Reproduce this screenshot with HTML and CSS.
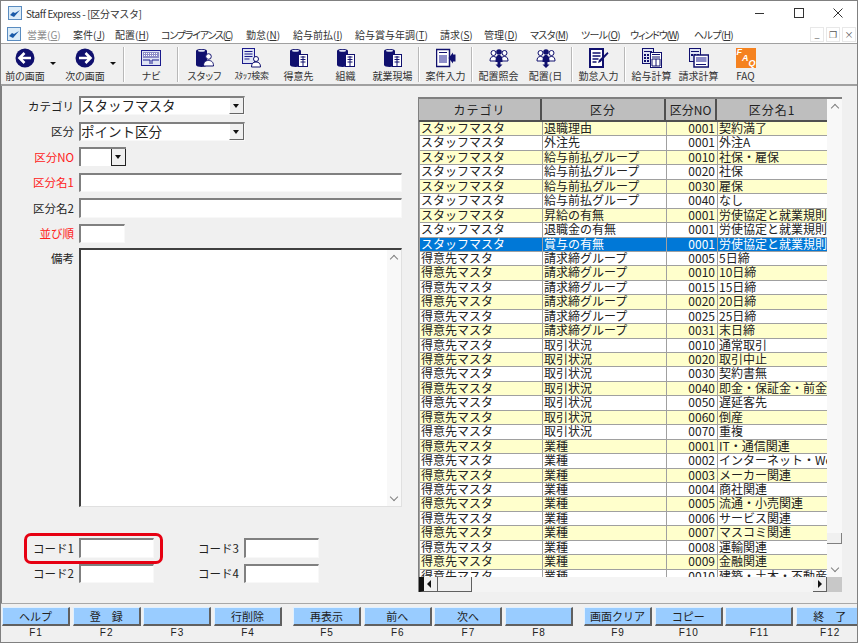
FILE: index.html
```html
<!DOCTYPE html>
<html lang="ja">
<head>
    <meta charset="UTF-8">
    <title>Staff Express - [区分マスタ]</title>
    <link rel="stylesheet" href="styles.css">
</head>
<body>
    <svg class="defs" width="0" height="0">
        <symbol id="i-back" viewBox="0 0 20 20">
            <circle cx="10" cy="10" r="9.5" fill="#10106e"/>
            <path d="M16 10H5M9.5 5L4.5 10l5 5" fill="none" stroke="#fff" stroke-width="2.6"/>
        </symbol>
        <symbol id="i-next" viewBox="0 0 20 20">
            <circle cx="10" cy="10" r="9.5" fill="#10106e"/>
            <path d="M4 10h11M10.5 5l5 5-5 5" fill="none" stroke="#fff" stroke-width="2.6"/>
        </symbol>
        <symbol id="i-navi" viewBox="0 0 20 20">
            <rect x="0.5" y="2.5" width="19" height="15" fill="#dfe4f4" stroke="#1a1a8c"/>
            <rect x="2" y="4" width="16" height="6" fill="#8c8cc8"/>
            <path d="M3 5.5h14M3 7.5h14" stroke="#fff" stroke-dasharray="1 1"/>
            <path d="M2 12h7v4M18 12h-7v4" fill="none" stroke="#1a1a8c"/>
        </symbol>
        <symbol id="i-staffman" viewBox="0 0 20 20">
            <path d="M1 3c0-2.600 11-2.600 11 0v14c0 2.600-11 2.600-11 0z" fill="#10106e"/>
            <ellipse cx="6.500" cy="2.800" rx="3.500" ry="1" fill="#dfe4f4"/>
            <circle cx="13.500" cy="8.500" r="2.800" fill="#fff" stroke="#10106e"/>
            <path d="M8.500 18c0-4 2-5.500 5-5.500s5 1.500 5 5.500z" fill="#fff" stroke="#10106e"/>
        </symbol>
        <symbol id="i-search" viewBox="0 0 20 20">
            <rect x="0.500" y="0.500" width="12" height="15" fill="#dfe4f4" stroke="#1a1a8c"/>
            <path d="M2.500 3.500h8M2.500 6h8M2.500 8.500h8M2.500 11h5" stroke="#1a1a8c"/>
            <circle cx="14" cy="11" r="2.500" fill="#fff" stroke="#10106e"/>
            <path d="M9.500 19c0-3.500 1.500-5 4.500-5s4.500 1.500 4.500 5z" fill="#fff" stroke="#10106e"/>
        </symbol>
        <symbol id="i-office" viewBox="0 0 20 20">
            <path d="M1 3c0-2.600 11-2.600 11 0v14c0 2.600-11 2.600-11 0z" fill="#10106e"/>
            <ellipse cx="6.500" cy="2.800" rx="3.500" ry="1" fill="#dfe4f4"/>
            <rect x="9.500" y="6.500" width="9" height="12" fill="#fff" stroke="#10106e"/>
            <path d="M11.500 9h5M11.500 11.500h5M11.500 14h5M14 8v10" stroke="#10106e"/>
        </symbol>
        <symbol id="i-case" viewBox="0 0 20 20">
            <rect x="0.500" y="1.500" width="13" height="17" fill="#fff" stroke="#10106e" stroke-width="1.500"/>
            <path d="M3 4.500h8" stroke="#10106e"/>
            <rect x="3" y="7" width="8" height="8" fill="#8c8cc8"/>
            <path d="M19.500 6.500v7h-2.500v2L12.500 10l4.500-5.500v2z" fill="#10106e"/>
        </symbol>
        <symbol id="i-assign" viewBox="0 0 20 20">
            <circle cx="4.500" cy="5" r="2.500" fill="#fff" stroke="#10106e"/>
            <circle cx="15.500" cy="5" r="2.500" fill="#fff" stroke="#10106e"/>
            <path d="M1 13c0-3 1-4.500 3.500-4.500S8 10 8 13zM12 13c0-3 1-4.500 3.500-4.500S19 10 19 13z" fill="#fff" stroke="#10106e"/>
            <circle cx="10" cy="4" r="2.800" fill="#10106e"/>
            <path d="M6.500 14c0-5 1-7 3.500-7s3.500 2 3.500 7z" fill="#10106e"/>
            <path d="M8.500 14h3v2.500h2L10 20l-3.500-3.500h2z" fill="#10106e"/>
        </symbol>
        <symbol id="i-time" viewBox="0 0 20 20">
            <rect x="1" y="1" width="13" height="18" fill="#fff" stroke="#10106e" stroke-width="2"/>
            <path d="M3.500 5h8M3.500 8h8M3.500 11h6M3.500 14h4" stroke="#10106e" stroke-width="1.500"/>
            <path d="M18.500 4l1 1.500-8 8.500-2.500 1 1-3z" fill="#10106e"/>
        </symbol>
        <symbol id="i-pay" viewBox="0 0 20 20">
            <rect x="0.500" y="0.500" width="11" height="15" fill="#dfe4f4" stroke="#10106e"/>
            <path d="M2 3h8v1H2zM2 6h2v2H2zM5 6h2v2H5zM8 6h2v2H8zM2 9h2v2H2zM5 9h2v2H5zM8 9h2v2H8zM2 12h2v2H2zM5 12h2v2H5z" fill="#10106e"/>
            <rect x="8.500" y="4.500" width="11" height="15" fill="#fff" stroke="#10106e"/>
            <path d="M10 6.500h8M10 9h8M14 11v7M10 11h8v7h-8z" fill="none" stroke="#10106e"/>
        </symbol>
        <symbol id="i-bill" viewBox="0 0 20 20">
            <rect x="0.500" y="0.500" width="11" height="13" fill="#dfe4f4" stroke="#10106e"/>
            <path d="M2 3h8v1H2zM2 6h2v2H2zM5 6h2v2H5zM8 6h2v2H8z" fill="#10106e"/>
            <rect x="5" y="7" width="14.500" height="12" fill="#fff" stroke="#10106e" stroke-width="1.500"/>
            <rect x="7" y="9" width="10.500" height="5" fill="#8c8cc8"/>
            <path d="M7 16.500h10" stroke="#10106e"/>
        </symbol>
    </svg>

    <div class="title-bar">
        <svg class="app-icon" viewBox="0 0 14 14"><rect x="0.500" y="0.500" width="13" height="13" fill="#dcecf8" stroke="#5a8cc0"/><path d="M2 9l4 2 6-7-5 3-2-1z" fill="#1a5aa8"/></svg>
        <span class="title-text">Staff Express - [区分マスタ]</span>
        <div class="win-controls">
            <svg viewBox="0 0 10 10"><path d="M0 5.500h9" stroke="#333"/></svg>
            <svg viewBox="0 0 10 10"><rect x="0.500" y="0.500" width="9" height="9" fill="none" stroke="#333"/></svg>
            <svg viewBox="0 0 10 10"><path d="M0.500 0.500l9 9M9.500 0.500l-9 9" stroke="#333"/></svg>
        </div>
    </div>

    <div class="menu-bar">
        <svg class="app-icon" viewBox="0 0 14 14"><rect x="0.500" y="0.500" width="13" height="13" fill="#dcecf8" stroke="#5a8cc0"/><path d="M2 9l4 2 6-7-5 3-2-1z" fill="#1a5aa8"/></svg>
        <div class="menu-items">
            <span class="disabled">営業(<u>G</u>)</span>
            <span>案件(<u>J</u>)</span>
            <span>配置(<u>H</u>)</span>
            <span class="kana tight">コンプライアンス(<u>C</u>)</span>
            <span>勤怠(<u>N</u>)</span>
            <span>給与前払(<u>I</u>)</span>
            <span>給与賞与年調(<u>T</u>)</span>
            <span>請求(<u>S</u>)</span>
            <span>管理(<u>D</u>)</span>
            <span class="kana">マスタ(<u>M</u>)</span>
            <span class="kana">ツール(<u>O</u>)</span>
            <span class="kana tight">ウィンドウ(<u>W</u>)</span>
            <span class="kana">ヘルプ(<u>H</u>)</span>
        </div>
        <div class="mdi-buttons">
            <span class="mdi-btn">_</span>
            <span class="mdi-btn">❐</span>
            <span class="mdi-btn">×</span>
        </div>
    </div>

    <div class="toolbar">
        <div class="tool wide"><svg class="tool-icon"><use href="#i-back"/></svg><span>前の画面</span></div>
        <div class="drop"></div>
        <div class="tool wide"><svg class="tool-icon"><use href="#i-next"/></svg><span>次の画面</span></div>
        <div class="drop"></div>
        <div class="sep"></div>
        <div class="tool wide"><svg class="tool-icon"><use href="#i-navi"/></svg><span>ナビ</span></div>
        <div class="sep"></div>
        <div class="tool"><svg class="tool-icon"><use href="#i-staffman"/></svg><span>スタッフ</span></div>
        <div class="tool"><svg class="tool-icon"><use href="#i-search"/></svg><span class="tiny">ｽﾀｯﾌ検索</span></div>
        <div class="tool"><svg class="tool-icon"><use href="#i-office"/></svg><span>得意先</span></div>
        <div class="tool"><svg class="tool-icon"><use href="#i-office"/></svg><span>組織</span></div>
        <div class="tool"><svg class="tool-icon"><use href="#i-office"/></svg><span>就業現場</span></div>
        <div class="sep"></div>
        <div class="tool"><svg class="tool-icon"><use href="#i-case"/></svg><span>案件入力</span></div>
        <div class="sep"></div>
        <div class="tool"><svg class="tool-icon"><use href="#i-assign"/></svg><span>配置照会</span></div>
        <div class="tool"><svg class="tool-icon"><use href="#i-assign"/></svg><span>配置(日</span></div>
        <div class="sep"></div>
        <div class="tool"><svg class="tool-icon"><use href="#i-time"/></svg><span>勤怠入力</span></div>
        <div class="sep"></div>
        <div class="tool"><svg class="tool-icon"><use href="#i-pay"/></svg><span>給与計算</span></div>
        <div class="tool"><svg class="tool-icon"><use href="#i-bill"/></svg><span>請求計算</span></div>
        <div class="tool"><div class="faq-icon"><b>F</b><b>A</b><b>Q</b></div><span>FAQ</span></div>
    </div>

    <div class="content">
        <div class="form">
            <div class="field-row">
                <label>カテゴリ</label>
                <div class="combo"><span class="combo-text">スタッフマスタ</span><span class="combo-btn"></span></div>
            </div>
            <div class="field-row">
                <label>区分</label>
                <div class="combo"><span class="combo-text">ポイント区分</span><span class="combo-btn"></span></div>
            </div>
            <div class="field-row">
                <label class="required">区分NO</label>
                <div class="combo small"><span class="combo-text"></span><span class="combo-btn"></span></div>
            </div>
            <div class="field-row">
                <label class="required">区分名1</label>
                <div class="input long"></div>
            </div>
            <div class="field-row">
                <label>区分名2</label>
                <div class="input long"></div>
            </div>
            <div class="field-row">
                <label class="required">並び順</label>
                <div class="input order"></div>
            </div>
            <div class="field-row memo-row">
                <label>備考</label>
                <div class="memo">
                    <div class="memo-scroll"><i class="chev up"></i><i class="chev down"></i></div>
                </div>
            </div>
            <div class="codes">
                <div class="highlight"></div>
                <div class="field-row">
                    <label>コード1</label>
                    <div class="input code"></div>
                </div>
                <div class="field-row">
                    <label class="code-label">コード3</label>
                    <div class="input code"></div>
                </div>
                <div class="field-row">
                    <label>コード2</label>
                    <div class="input code"></div>
                </div>
                <div class="field-row">
                    <label class="code-label">コード4</label>
                    <div class="input code"></div>
                </div>
            </div>
        </div>

        <div class="grid-box">
            <div class="grid-main">
                <div class="list">
                    <div class="row head"><span>カテゴリ</span><span>区分</span><span>区分NO</span><span>区分名1</span></div>
                    <div class="row odd"><span>スタッフマスタ</span><span>退職理由</span><span>0001</span><span>契約満了</span></div>
                    <div class="row"><span>スタッフマスタ</span><span>外注先</span><span>0001</span><span>外注A</span></div>
                    <div class="row odd"><span>スタッフマスタ</span><span>給与前払グループ</span><span>0010</span><span>社保・雇保</span></div>
                    <div class="row"><span>スタッフマスタ</span><span>給与前払グループ</span><span>0020</span><span>社保</span></div>
                    <div class="row odd"><span>スタッフマスタ</span><span>給与前払グループ</span><span>0030</span><span>雇保</span></div>
                    <div class="row"><span>スタッフマスタ</span><span>給与前払グループ</span><span>0040</span><span>なし</span></div>
                    <div class="row odd"><span>スタッフマスタ</span><span>昇給の有無</span><span>0001</span><span>労使協定と就業規則による</span></div>
                    <div class="row"><span>スタッフマスタ</span><span>退職金の有無</span><span>0001</span><span>労使協定と就業規則による</span></div>
                    <div class="row sel"><span>スタッフマスタ</span><span>賞与の有無</span><span>0001</span><span>労使協定と就業規則による</span></div>
                    <div class="row"><span>得意先マスタ</span><span>請求締グループ</span><span>0005</span><span>5日締</span></div>
                    <div class="row odd"><span>得意先マスタ</span><span>請求締グループ</span><span>0010</span><span>10日締</span></div>
                    <div class="row"><span>得意先マスタ</span><span>請求締グループ</span><span>0015</span><span>15日締</span></div>
                    <div class="row odd"><span>得意先マスタ</span><span>請求締グループ</span><span>0020</span><span>20日締</span></div>
                    <div class="row"><span>得意先マスタ</span><span>請求締グループ</span><span>0025</span><span>25日締</span></div>
                    <div class="row odd"><span>得意先マスタ</span><span>請求締グループ</span><span>0031</span><span>末日締</span></div>
                    <div class="row"><span>得意先マスタ</span><span>取引状況</span><span>0010</span><span>通常取引</span></div>
                    <div class="row odd"><span>得意先マスタ</span><span>取引状況</span><span>0020</span><span>取引中止</span></div>
                    <div class="row"><span>得意先マスタ</span><span>取引状況</span><span>0030</span><span>契約書無</span></div>
                    <div class="row odd"><span>得意先マスタ</span><span>取引状況</span><span>0040</span><span>即金・保証金・前金</span></div>
                    <div class="row"><span>得意先マスタ</span><span>取引状況</span><span>0050</span><span>遅延客先</span></div>
                    <div class="row odd"><span>得意先マスタ</span><span>取引状況</span><span>0060</span><span>倒産</span></div>
                    <div class="row"><span>得意先マスタ</span><span>取引状況</span><span>0070</span><span>重複</span></div>
                    <div class="row odd"><span>得意先マスタ</span><span>業種</span><span>0001</span><span>IT・通信関連</span></div>
                    <div class="row"><span>得意先マスタ</span><span>業種</span><span>0002</span><span>インターネット・Web</span></div>
                    <div class="row odd"><span>得意先マスタ</span><span>業種</span><span>0003</span><span>メーカー関連</span></div>
                    <div class="row"><span>得意先マスタ</span><span>業種</span><span>0004</span><span>商社関連</span></div>
                    <div class="row odd"><span>得意先マスタ</span><span>業種</span><span>0005</span><span>流通・小売関連</span></div>
                    <div class="row"><span>得意先マスタ</span><span>業種</span><span>0006</span><span>サービス関連</span></div>
                    <div class="row odd"><span>得意先マスタ</span><span>業種</span><span>0007</span><span>マスコミ関連</span></div>
                    <div class="row"><span>得意先マスタ</span><span>業種</span><span>0008</span><span>運輸関連</span></div>
                    <div class="row odd"><span>得意先マスタ</span><span>業種</span><span>0009</span><span>金融関連</span></div>
                    <div class="row"><span>得意先マスタ</span><span>業種</span><span>0010</span><span>建築・土木・不動産関連</span></div>
                </div>
                <div class="vscroll">
                    <i class="chev up"></i>
                    <div class="vthumb"></div>
                    <i class="chev down"></i>
                </div>
            </div>
            <div class="hscroll">
                <span class="h-btn left"></span>
                <div class="hthumb"></div>
                <div class="h-track"></div>
                <span class="h-btn right"></span>
                <span class="h-corner"></span>
            </div>
        </div>
    </div>

    <div class="fkeys">
        <div class="fkey"><button>ヘルプ</button><span>F1</span></div>
        <div class="fkey"><button>登　録</button><span>F2</span></div>
        <div class="fkey"><button></button><span>F3</span></div>
        <div class="fkey"><button>行削除</button><span>F4</span></div>
        <div class="fkey group"><button>再表示</button><span>F5</span></div>
        <div class="fkey"><button>前へ</button><span>F6</span></div>
        <div class="fkey"><button>次へ</button><span>F7</span></div>
        <div class="fkey"><button></button><span>F8</span></div>
        <div class="fkey group"><button>画面クリア</button><span>F9</span></div>
        <div class="fkey"><button>コピー</button><span>F10</span></div>
        <div class="fkey"><button></button><span>F11</span></div>
        <div class="fkey"><button>終　了</button><span>F12</span></div>
    </div>
</body>
</html>
```

FILE: styles.css
```css
* {
    box-sizing: border-box;
}
html, body {
    margin: 0;
    height: 100%;
}
body {
    width: 858px;
    height: 643px;
    overflow: hidden;
    display: flex;
    flex-direction: column;
    background-color: #f0f0f0;
    border: 1px solid #808080;
    font-family: "Noto Sans CJK JP", "Noto Sans", sans-serif;
    font-size: 12px;
    color: #222;
}
.defs {
    position: absolute;
}

/* title + menu */
.title-bar {
    height: 24px;
    flex: none;
    display: flex;
    align-items: center;
    padding-left: 7px;
    background-color: #fff;
}
.app-icon {
    width: 14px;
    height: 14px;
    flex: none;
}
.title-text {
    margin-left: 4px;
    font-size: 10px;
    letter-spacing: -0.35px;
    color: #333;
}
.win-controls {
    margin-left: auto;
    display: flex;
    align-items: center;
    gap: 29px;
    padding-right: 14px;
}
.win-controls svg {
    width: 10px;
    height: 10px;
}
.menu-bar {
    height: 18px;
    flex: none;
    display: flex;
    align-items: center;
    padding-left: 6px;
    background-color: #fff;
    font-size: 10px;
    white-space: nowrap;
}
.menu-items {
    margin-left: 6px;
    display: grid;
    grid-template-columns: 46px 42px 46px 85px 47px 62px 85px 44px 46px 51px 49px 64px 60px;
    font-feature-settings: "palt";
    color: #333;
}
.menu-items .disabled {
    color: #8c8c8c;
}
.menu-items .kana {
    letter-spacing: -0.6px;
}
.menu-items .kana.tight {
    letter-spacing: -1.2px;
}
.mdi-buttons {
    margin-left: auto;
    display: flex;
    gap: 2px;
    padding-right: 1px;
}
.mdi-btn {
    width: 14px;
    height: 15px;
    border: 1px solid #e8e8e8;
    font-size: 9px;
    line-height: 13px;
    text-align: center;
    color: #555;
}

/* toolbar */
.toolbar {
    height: 43px;
    flex: none;
    display: flex;
    padding-top: 4px;
    background-color: #f0f0f0;
    border-top: 1px solid #a0a0a0;
    border-bottom: 2px solid #a0a0a0;
}
.tool {
    width: 47px;
    flex: none;
    display: flex;
    flex-direction: column;
    align-items: center;
    font-size: 10px;
    font-feature-settings: "palt";
    line-height: 14px;
    white-space: nowrap;
    color: #333;
}
.tool.wide {
    width: 48px;
}
.tool .tiny {
    font-size: 9px;
    letter-spacing: -0.3px;
}
.tool-icon {
    width: 20px;
    height: 20px;
    margin-bottom: 1px;
}
.faq-icon {
    width: 20px;
    height: 20px;
    margin-bottom: 1px;
    padding: 0 1px;
    display: flex;
    justify-content: space-between;
    background-color: #f58220;
    color: #fff;
    font-family: "Liberation Sans", sans-serif;
    font-size: 9px;
    font-style: italic;
    line-height: 9px;
}
.faq-icon b:nth-child(2) {
    align-self: center;
}
.faq-icon b:nth-child(3) {
    align-self: flex-end;
}
.drop {
    width: 12px;
    flex: none;
    position: relative;
}
.drop::after {
    content: "";
    position: absolute;
    left: 1px;
    top: 14px;
    border-left: 3px solid transparent;
    border-right: 3px solid transparent;
    border-top: 3px solid #111;
}
.sep {
    width: 2px;
    height: 35px;
    flex: none;
    margin: -1px 2px 0;
    border-left: 1px solid #b8b8b8;
    border-right: 1px solid #fff;
}

/* main area */
.content {
    flex: 1;
    min-height: 0;
    display: flex;
    border-left: 1px solid #808080;
    padding-top: 7px;
}
.form {
    width: 416px;
    flex: none;
    padding-right: 15px;
}
.field-row {
    display: flex;
    align-items: center;
    height: 25.5px;
}
.field-row label {
    width: 72px;
    flex: none;
    margin-right: 5px;
    text-align: right;
    font-size: 11.5px;
    white-space: nowrap;
}
.field-row label.required {
    color: #ff2020;
}
.combo {
    width: 166px;
    height: 19px;
    display: flex;
    background-color: #fff;
    border-top: 2px solid #808080;
    border-left: 2px solid #808080;
    border-right: 1px solid #f8f8f8;
    border-bottom: 1px solid #f8f8f8;
}
.combo.small {
    width: 47px;
    border-right: 0;
    border-bottom: 0;
}
.combo-text {
    flex: 1;
    font-size: 13.500px;
    line-height: 15px;
    white-space: nowrap;
}
.combo-btn {
    width: 15px;
    flex: none;
    position: relative;
    background-color: #f0f0f0;
    border-left: 1px solid #fff;
    border-right: 1px solid #666;
    border-bottom: 1px solid #666;
}
.combo.small .combo-btn {
    border-left: 1px solid #222;
    border-right: 1px solid #222;
    border-bottom: 1px solid #222;
}
.combo-btn::after {
    content: "";
    position: absolute;
    left: 3px;
    top: 6px;
    border-left: 3px solid transparent;
    border-right: 3px solid transparent;
    border-top: 4px solid #111;
}
.input {
    height: 19.500px;
    background-color: #fff;
    border-top: 2px solid #808080;
    border-left: 2px solid #808080;
    border-right: 1px solid #f8f8f8;
    border-bottom: 1px solid #f8f8f8;
}
.input.long {
    width: 323px;
}
.input.order {
    width: 46px;
}
.input.code {
    width: 75px;
}
.memo-row {
    height: 259px;
    align-items: flex-start;
    margin-top: 2px;
}
.memo-row label {
    margin-top: 2px;
}
.memo {
    width: 323px;
    height: 259px;
    display: flex;
    justify-content: flex-end;
    background-color: #fff;
    border-top: 2px solid #404040;
    border-left: 2px solid #404040;
    border-right: 1px solid #e0e0e0;
    border-bottom: 1px solid #e0e0e0;
}
.memo-scroll {
    width: 14px;
    padding: 6px 0;
    display: flex;
    flex-direction: column;
    justify-content: space-between;
    align-items: center;
    background-color: #f8f8f8;
}
.chev {
    display: block;
    width: 6px;
    height: 6px;
    border-top: 1.500px solid #808080;
    border-left: 1.500px solid #808080;
}
.chev.up {
    transform: rotate(45deg);
}
.chev.down {
    transform: rotate(225deg);
}
.codes {
    position: relative;
    display: grid;
    grid-template-columns: 162px 1fr;
    margin-top: 28px;
}
.codes .code-label {
    width: 75px;
}
.highlight {
    position: absolute;
    left: 22px;
    top: -2px;
    width: 139px;
    height: 31px;
    border: 3px solid #e60012;
    border-radius: 7px;
}

/* list */
.grid-box {
    width: 424px;
    height: 495px;
    flex: none;
    margin-top: 4px;
    border-top: 2px solid #808080;
    border-left: 1px solid #808080;
}
.grid-main {
    height: 478px;
    display: flex;
}
.list {
    width: 408px;
    flex: none;
    overflow: hidden;
    background-color: #fff;
}
.row {
    height: 14.450px;
    display: grid;
    grid-template-columns: 123px 124px 51px 112px;
    border-bottom: 1px solid #a0a0a0;
    line-height: 11px;
    white-space: nowrap;
}
.row span {
    padding-left: 1px;
    border-left: 1px solid #a0a0a0;
}
.row span:nth-child(3) {
    padding-right: 2px;
    text-align: right;
}
.row.odd {
    background-color: #ffffcc;
}
.row.sel {
    background-color: #0078d7;
    color: #fff;
}
.row.head {
    height: 23px;
    background-color: #bebebe;
    border-bottom: 2px solid #505050;
    line-height: 21px;
    text-align: center;
}
.row.head span {
    padding: 0;
    border-left: 0;
    border-right: 2px solid #505050;
    letter-spacing: 1px;
    text-align: center;
}
.row.head span:nth-child(3) {
    padding: 0;
    letter-spacing: 0;
    text-align: center;
}
.vscroll {
    flex: 1;
    position: relative;
    padding: 6px 0;
    display: flex;
    flex-direction: column;
    justify-content: space-between;
    align-items: center;
    background-color: #f8f8f8;
}
.vthumb {
    position: absolute;
    left: 0;
    right: 0;
    top: 434px;
    height: 11px;
    background-color: #f0f0f0;
    border-right: 1px solid #808080;
    border-bottom: 1px solid #808080;
}
.hscroll {
    height: 15px;
    display: flex;
    background-color: #f0f0f0;
}
.h-btn {
    width: 14px;
    flex: none;
    position: relative;
    background-color: #f0f0f0;
    border-right: 1px solid #606060;
    border-bottom: 1px solid #606060;
}
.h-btn.left {
    width: 19px;
    border-left: 5px solid #111;
}
.h-btn::after {
    content: "";
    position: absolute;
    top: 3px;
    border-top: 4px solid transparent;
    border-bottom: 4px solid transparent;
}
.h-btn.left::after {
    left: 3px;
    border-right: 4px solid #111;
}
.h-btn.right::after {
    left: 5px;
    border-left: 4px solid #111;
}
.hthumb {
    width: 34px;
    flex: none;
    background-color: #f0f0f0;
    border-right: 1px solid #606060;
    border-bottom: 1px solid #606060;
}
.h-track {
    flex: 1;
    background-color: #f4f4f4;
}
.h-corner {
    width: 15px;
    flex: none;
    background-color: #c8c8c8;
}

/* function keys */
.fkeys {
    height: 39px;
    flex: none;
    display: flex;
    padding: 3px 0 0 1px;
    overflow: hidden;
    border-top: 1px solid #a8a8a8;
}
.fkey {
    width: 68px;
    flex: none;
    margin-right: 2.700px;
    display: flex;
    flex-direction: column;
    align-items: center;
}
.fkey.group {
    margin-left: 8.300px;
}
.fkey button {
    width: 68px;
    height: 19px;
    padding: 0;
    background-color: #99ccff;
    border: 0;
    border-top: 1px solid #e0f0ff;
    border-left: 1px solid #e0f0ff;
    border-right: 2px solid #606060;
    border-bottom: 2px solid #606060;
    font-family: inherit;
    font-size: 11px;
    line-height: 15px;
    color: #222;
}
.fkey span {
    font-family: "Liberation Sans", sans-serif;
    font-size: 10px;
    line-height: 14px;
    letter-spacing: 1px;
}
```
